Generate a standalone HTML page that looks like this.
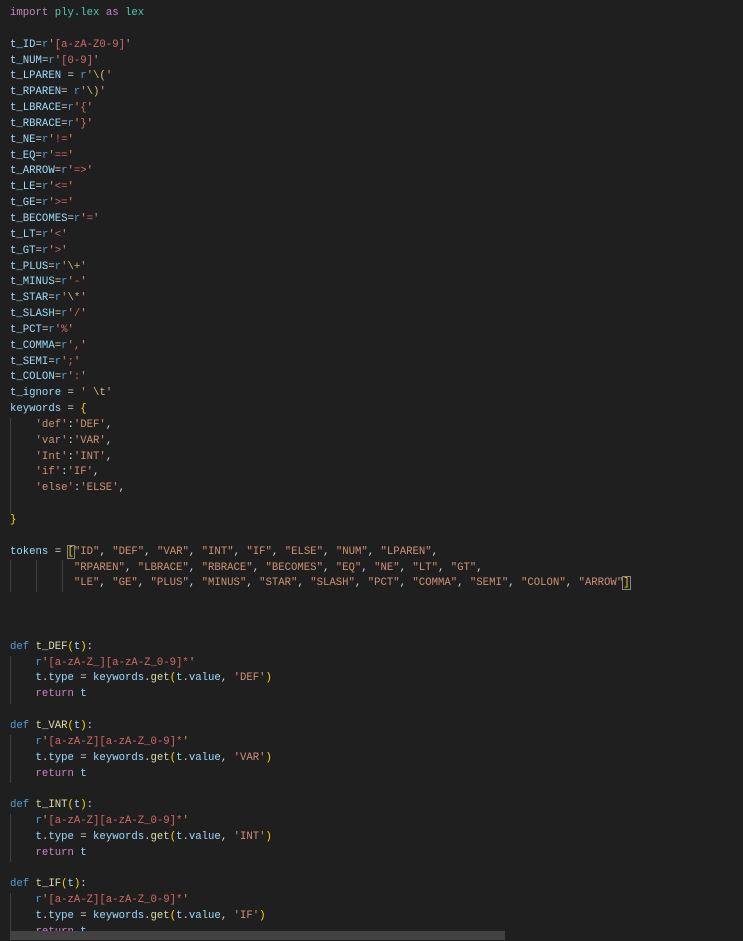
<!DOCTYPE html>
<html><head><meta charset="utf-8"><style>
html,body{margin:0;padding:0;background:#1f1f1f;width:743px;height:940px;overflow:hidden}
pre{margin:0;position:absolute;left:10px;top:6px;font-family:"Liberation Mono",monospace;font-size:10.65px;line-height:15.84px;color:#d4d4d4}
.k{color:#c586c0}.d{color:#569cd6}.v{color:#9cdcfe}.s{color:#ce9178}.f{color:#dcdcaa}.b{color:#ffd700}.r{color:#d16969}.e{color:#d7ba7d}.n{color:#4ec9b0}
.g{position:absolute;width:1px;background:#404040}
.sb{position:absolute;left:10px;top:931px;width:495px;height:9px;background:#424242}
.bx{outline:1px solid #888}
</style></head><body>
<div class="g" style="left:10px;top:418px;height:95px"></div>
<div class="g" style="left:10px;top:560px;height:32px"></div>
<div class="g" style="left:36px;top:560px;height:32px"></div>
<div class="g" style="left:62px;top:560px;height:32px"></div>
<div class="g" style="left:10px;top:656px;height:48px"></div>
<div class="g" style="left:10px;top:735px;height:48px"></div>
<div class="g" style="left:10px;top:814px;height:48px"></div>
<div class="g" style="left:10px;top:893px;height:48px"></div>
<pre><span class="k">import</span> <span class="n">ply.lex</span> <span class="k">as</span> <span class="n">lex</span>

<span class="v">t_ID</span>=<span class="d">r</span><span class="s">'</span><span class="r">[a-zA-Z0-9]</span><span class="s">'</span>
<span class="v">t_NUM</span>=<span class="d">r</span><span class="s">'</span><span class="r">[0-9]</span><span class="s">'</span>
<span class="v">t_LPAREN</span> = <span class="d">r</span><span class="s">'</span><span class="e">\(</span><span class="s">'</span>
<span class="v">t_RPAREN</span>= <span class="d">r</span><span class="s">'</span><span class="e">\)</span><span class="s">'</span>
<span class="v">t_LBRACE</span>=<span class="d">r</span><span class="s">'</span><span class="r">{</span><span class="s">'</span>
<span class="v">t_RBRACE</span>=<span class="d">r</span><span class="s">'</span><span class="r">}</span><span class="s">'</span>
<span class="v">t_NE</span>=<span class="d">r</span><span class="s">'</span><span class="r">!=</span><span class="s">'</span>
<span class="v">t_EQ</span>=<span class="d">r</span><span class="s">'</span><span class="r">==</span><span class="s">'</span>
<span class="v">t_ARROW</span>=<span class="d">r</span><span class="s">'</span><span class="r">=&gt;</span><span class="s">'</span>
<span class="v">t_LE</span>=<span class="d">r</span><span class="s">'</span><span class="r">&lt;=</span><span class="s">'</span>
<span class="v">t_GE</span>=<span class="d">r</span><span class="s">'</span><span class="r">&gt;=</span><span class="s">'</span>
<span class="v">t_BECOMES</span>=<span class="d">r</span><span class="s">'</span><span class="r">=</span><span class="s">'</span>
<span class="v">t_LT</span>=<span class="d">r</span><span class="s">'</span><span class="r">&lt;</span><span class="s">'</span>
<span class="v">t_GT</span>=<span class="d">r</span><span class="s">'</span><span class="r">&gt;</span><span class="s">'</span>
<span class="v">t_PLUS</span>=<span class="d">r</span><span class="s">'</span><span class="e">\+</span><span class="s">'</span>
<span class="v">t_MINUS</span>=<span class="d">r</span><span class="s">'</span><span class="r">-</span><span class="s">'</span>
<span class="v">t_STAR</span>=<span class="d">r</span><span class="s">'</span><span class="e">\*</span><span class="s">'</span>
<span class="v">t_SLASH</span>=<span class="d">r</span><span class="s">'</span><span class="r">/</span><span class="s">'</span>
<span class="v">t_PCT</span>=<span class="d">r</span><span class="s">'</span><span class="r">%</span><span class="s">'</span>
<span class="v">t_COMMA</span>=<span class="d">r</span><span class="s">'</span><span class="r">,</span><span class="s">'</span>
<span class="v">t_SEMI</span>=<span class="d">r</span><span class="s">'</span><span class="r">;</span><span class="s">'</span>
<span class="v">t_COLON</span>=<span class="d">r</span><span class="s">'</span><span class="r">:</span><span class="s">'</span>
<span class="v">t_ignore</span> = <span class="s">' </span><span class="e">\t</span><span class="s">'</span>
<span class="v">keywords</span> = <span class="b">{</span>
    <span class="s">'def'</span>:<span class="s">'DEF'</span>,
    <span class="s">'var'</span>:<span class="s">'VAR'</span>,
    <span class="s">'Int'</span>:<span class="s">'INT'</span>,
    <span class="s">'if'</span>:<span class="s">'IF'</span>,
    <span class="s">'else'</span>:<span class="s">'ELSE'</span>,

<span class="b">}</span>

<span class="v">tokens</span> = <span class="b bx">[</span><span class="s">"ID"</span>, <span class="s">"DEF"</span>, <span class="s">"VAR"</span>, <span class="s">"INT"</span>, <span class="s">"IF"</span>, <span class="s">"ELSE"</span>, <span class="s">"NUM"</span>, <span class="s">"LPAREN"</span>,
          <span class="s">"RPAREN"</span>, <span class="s">"LBRACE"</span>, <span class="s">"RBRACE"</span>, <span class="s">"BECOMES"</span>, <span class="s">"EQ"</span>, <span class="s">"NE"</span>, <span class="s">"LT"</span>, <span class="s">"GT"</span>,
          <span class="s">"LE"</span>, <span class="s">"GE"</span>, <span class="s">"PLUS"</span>, <span class="s">"MINUS"</span>, <span class="s">"STAR"</span>, <span class="s">"SLASH"</span>, <span class="s">"PCT"</span>, <span class="s">"COMMA"</span>, <span class="s">"SEMI"</span>, <span class="s">"COLON"</span>, <span class="s">"ARROW"</span><span class="b bx">]</span>



<span class="d">def</span> <span class="f">t_DEF</span><span class="b">(</span><span class="v">t</span><span class="b">)</span>:
    <span class="d">r</span><span class="s">'</span><span class="r">[a-zA-Z_][a-zA-Z_0-9]*</span><span class="s">'</span>
    <span class="v">t</span>.<span class="v">type</span> = <span class="v">keywords</span>.<span class="f">get</span><span class="b">(</span><span class="v">t</span>.<span class="v">value</span>, <span class="s">'DEF'</span><span class="b">)</span>
    <span class="k">return</span> <span class="v">t</span>

<span class="d">def</span> <span class="f">t_VAR</span><span class="b">(</span><span class="v">t</span><span class="b">)</span>:
    <span class="d">r</span><span class="s">'</span><span class="r">[a-zA-Z][a-zA-Z_0-9]*</span><span class="s">'</span>
    <span class="v">t</span>.<span class="v">type</span> = <span class="v">keywords</span>.<span class="f">get</span><span class="b">(</span><span class="v">t</span>.<span class="v">value</span>, <span class="s">'VAR'</span><span class="b">)</span>
    <span class="k">return</span> <span class="v">t</span>

<span class="d">def</span> <span class="f">t_INT</span><span class="b">(</span><span class="v">t</span><span class="b">)</span>:
    <span class="d">r</span><span class="s">'</span><span class="r">[a-zA-Z][a-zA-Z_0-9]*</span><span class="s">'</span>
    <span class="v">t</span>.<span class="v">type</span> = <span class="v">keywords</span>.<span class="f">get</span><span class="b">(</span><span class="v">t</span>.<span class="v">value</span>, <span class="s">'INT'</span><span class="b">)</span>
    <span class="k">return</span> <span class="v">t</span>

<span class="d">def</span> <span class="f">t_IF</span><span class="b">(</span><span class="v">t</span><span class="b">)</span>:
    <span class="d">r</span><span class="s">'</span><span class="r">[a-zA-Z][a-zA-Z_0-9]*</span><span class="s">'</span>
    <span class="v">t</span>.<span class="v">type</span> = <span class="v">keywords</span>.<span class="f">get</span><span class="b">(</span><span class="v">t</span>.<span class="v">value</span>, <span class="s">'IF'</span><span class="b">)</span>
    <span class="k">return</span> <span class="v">t</span></pre>
<div class="sb"></div>
</body></html>
